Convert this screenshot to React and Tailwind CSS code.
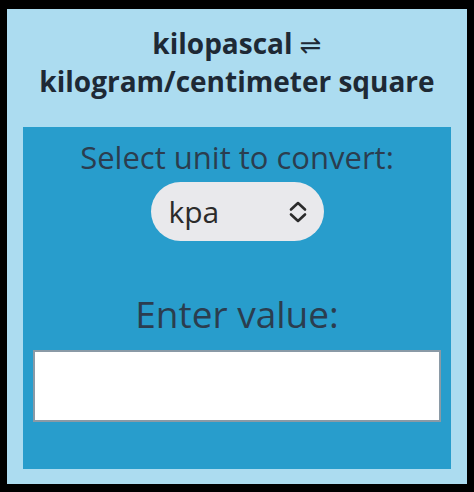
import React from "react";

function UpDownIcon() {
	return (
		<svg width="20" height="24" viewBox="0 0 20 24" fill="none" stroke="#2b2b2b" strokeWidth="2.6" strokeLinecap="round" strokeLinejoin="round">
			<path d="M3 9.5 L10 3 L17 9.5" />
			<path d="M3 14.5 L10 21 L17 14.5" />
		</svg>
	);
}

export default function App() {
	return (
		<div
			className="w-[474px] h-[492px] bg-black pt-[9px] px-[7px] pb-[8px]"
			style={{ fontFamily: '"Open Sans", "Noto Sans", sans-serif' }}
		>
			<div className="h-full bg-[#acdcf0] flex flex-col">
				{/* title */}
				<div className="pt-[16px] h-[118px] text-center text-[#1e2935] font-bold text-[28px] leading-[36px]">
					<div>
						kilopascal{" "}
						<span className="font-normal text-[26px]" style={{ fontFamily: '"DejaVu Sans", sans-serif' }}>
							⇌
						</span>
					</div>
					<div>kilogram/centimeter square</div>
				</div>

				{/* converter */}
				<div className="mx-[16px] mb-[15px] flex-1 bg-[#289dcc] flex flex-col items-center">
					<div className="mt-[10px] text-[31px] leading-[40px] text-[#2b3d4f]">
						Select unit to convert:
					</div>
					<div className="mt-[5px] w-[173px] h-[59px] rounded-full bg-[#e9e9ec] flex items-center justify-between pl-[18px] pr-[16px]">
						<span className="text-[30px] leading-[40px] text-[#2b2b2b]">kpa</span>
						<UpDownIcon />
					</div>
					<div className="mt-[48px] text-[37px] leading-[50px] text-[#2b3d4f]">
						Enter value:
					</div>
					<input
						type="text"
						className="mt-[11px] w-[408px] h-[72px] bg-white border-2 border-[#8a9aa6] outline-none"
					/>
				</div>
			</div>
		</div>
	);
}
